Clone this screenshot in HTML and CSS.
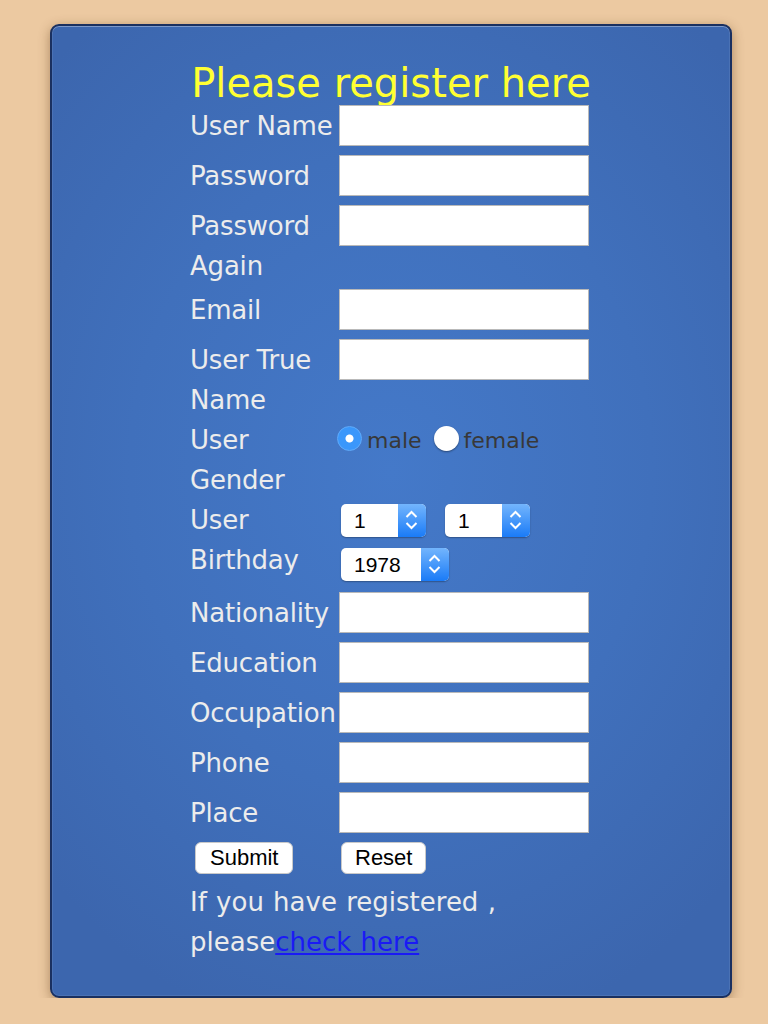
FILE: index.html
```html
<!DOCTYPE html>
<html lang="en">
<head>
<meta charset="utf-8">
<title>Register</title>
<link rel="stylesheet" href="styles.css">
</head>
<body>
<div class="panel">
  <form class="form">
    <h1 class="title">Please register here</h1>

    <div class="row row--first">
      <label class="label">User Name</label>
      <input class="field" type="text">
    </div>
    <div class="row">
      <label class="label">Password</label>
      <input class="field" type="password">
    </div>
    <div class="row">
      <label class="label">Password Again</label>
      <input class="field" type="password">
    </div>
    <div class="row row--after-wrap">
      <label class="label">Email</label>
      <input class="field" type="text">
    </div>
    <div class="row">
      <label class="label">User True Name</label>
      <input class="field" type="text">
    </div>
    <div class="row row--stacked">
      <span class="label label--flush">User Gender</span>
      <div class="radios">
        <label class="radio-opt"><input class="radio" type="radio" name="gender" checked><span class="radio-text">male</span></label>
        <label class="radio-opt"><input class="radio" type="radio" name="gender"><span class="radio-text">female</span></label>
      </div>
    </div>
    <div class="row row--stacked">
      <span class="label label--flush">User Birthday</span>
      <div class="selects">
        <div class="select-line">
          <span class="select">
            <select class="select-box"><option>1</option></select>
            <span class="select-arrow"><svg width="28" height="33" viewBox="0 0 28 33"><polyline points="8.5,13 13.5,8 18.5,13" fill="none" stroke="#fff" stroke-width="2"/><polyline points="8.5,19 13.5,24 18.5,19" fill="none" stroke="#fff" stroke-width="2"/></svg></span>
          </span>
          <span class="select">
            <select class="select-box"><option>1</option></select>
            <span class="select-arrow"><svg width="28" height="33" viewBox="0 0 28 33"><polyline points="8.5,13 13.5,8 18.5,13" fill="none" stroke="#fff" stroke-width="2"/><polyline points="8.5,19 13.5,24 18.5,19" fill="none" stroke="#fff" stroke-width="2"/></svg></span>
          </span>
        </div>
        <div class="select-line">
          <span class="select select--wide">
            <select class="select-box"><option>1978</option></select>
            <span class="select-arrow"><svg width="28" height="33" viewBox="0 0 28 33"><polyline points="8.5,13 13.5,8 18.5,13" fill="none" stroke="#fff" stroke-width="2"/><polyline points="8.5,19 13.5,24 18.5,19" fill="none" stroke="#fff" stroke-width="2"/></svg></span>
          </span>
        </div>
      </div>
    </div>
    <div class="row row--nationality">
      <label class="label">Nationality</label>
      <input class="field" type="text">
    </div>
    <div class="row">
      <label class="label">Education</label>
      <input class="field" type="text">
    </div>
    <div class="row">
      <label class="label">Occupation</label>
      <input class="field" type="text">
    </div>
    <div class="row">
      <label class="label">Phone</label>
      <input class="field" type="text">
    </div>
    <div class="row">
      <label class="label">Place</label>
      <input class="field" type="text">
    </div>

    <div class="actions">
      <div class="actions-cell">
        <button class="btn" type="submit">Submit</button>
      </div>
      <button class="btn btn--reset" type="reset">Reset</button>
    </div>

    <p class="note">If you have registered ,<br>please<a class="note-link" href="#">check here</a></p>
  </form>
</div>
</body>
</html>
```

FILE: styles.css
```css
body {
  margin: 0;
  background: #ecc9a1;
  font-family: Verdana, "DejaVu Sans", sans-serif;
}

.panel {
  box-sizing: border-box;
  width: 682px;
  margin: 24px 0 0 50px;
  padding: 35px 0 34px 138px;
  border: 2px solid #1a3060;
  border-radius: 9px;
  background: radial-gradient(ellipse 70% 60% at 50% 46%, #4479c9 0%, #4070bc 55%, #3c66ae 100%);
  box-shadow: 0 3px 12px rgba(90, 55, 20, 0.45), inset 0 1px 0 rgba(255, 255, 255, 0.28), inset 0 0 0 1px rgba(255, 255, 255, 0.08);
}

.form {
  width: 402px;
}

.title {
  margin: 0;
  font-size: 40px;
  font-weight: normal;
  line-height: 44px;
  color: #ffff33;
  text-align: center;
}

.row {
  display: flex;
  align-items: flex-start;
  margin-top: 9px;
}

.row--first {
  margin-top: 0;
}

.row--after-wrap {
  margin-top: 3px;
}

.row--stacked {
  margin-top: 0;
}

.row--nationality {
  margin-top: 11px;
}

.label {
  flex: none;
  box-sizing: border-box;
  width: 149px;
  padding-top: 1px;
  font-size: 26px;
  line-height: 40px;
  letter-spacing: -0.2px;
  color: #ececec;
}

.label--flush {
  padding-top: 0;
}

.field {
  box-sizing: border-box;
  width: 250px;
  height: 41px;
  margin: 0;
  padding: 0 4px;
  border: 1px solid #b9b9b9;
  background: #fff;
  font-size: 16px;
}

.radios {
  display: flex;
  align-items: flex-start;
}

.radio-opt {
  display: flex;
  align-items: flex-start;
}

.radio-opt + .radio-opt {
  margin-left: 14px;
}

.radio {
  -webkit-appearance: none;
  appearance: none;
  box-sizing: border-box;
  width: 25px;
  height: 25px;
  margin: 6px 5px 0 -2px;
  border-radius: 50%;
  background: #fff;
  box-shadow: 0 1px 2px rgba(0, 0, 0, 0.4);
}

.radio:checked {
  border: 1px solid #5fabfb;
  background: radial-gradient(circle, #fff 0, #fff 3.5px, #3a97fb 4.5px);
  box-shadow: none;
}

.radio-text {
  padding-top: 1px;
  font-size: 22px;
  line-height: 40px;
  color: #383838;
}

.selects {
  display: flex;
  flex-direction: column;
  align-items: flex-start;
  gap: 11px;
  margin-left: 2px;
  padding-top: 4px;
}

.select-line {
  display: flex;
  gap: 19px;
}

.select {
  display: inline-flex;
  height: 33px;
  border-radius: 5px;
  background: #fff;
  box-shadow: 0 1px 1.5px rgba(0, 0, 0, 0.3);
}

.select-box {
  -webkit-appearance: none;
  appearance: none;
  width: 57px;
  height: 33px;
  margin: 0;
  padding: 0 0 0 13px;
  border: 0;
  border-radius: 5px 0 0 5px;
  background: transparent;
  font-family: "Liberation Sans", Arial, sans-serif;
  font-size: 21px;
  color: #000;
  outline: none;
}

.select--wide .select-box {
  width: 80px;
}

.select-arrow {
  display: flex;
  width: 28px;
  height: 33px;
  border-radius: 0 5px 5px 0;
  background: linear-gradient(#73b5fd, #1a7bf7);
}

.actions {
  display: flex;
  margin-top: 9px;
}

.actions-cell {
  box-sizing: border-box;
  width: 149px;
  padding-left: 5px;
}

.btn {
  height: 32px;
  margin: 0;
  padding: 0 14px;
  border: 1px solid #c9c9c9;
  border-radius: 6px;
  background: #fff;
  font-family: "Liberation Sans", Arial, sans-serif;
  font-size: 22px;
  color: #000;
}

.btn--reset {
  margin-left: 2px;
  padding: 0 13px;
}

.note {
  margin: 8px 0 0;
  font-size: 26px;
  line-height: 40px;
  word-spacing: 1px;
  color: #ececec;
}

.note-link {
  color: #1a1af5;
  text-decoration: underline;
}
```
